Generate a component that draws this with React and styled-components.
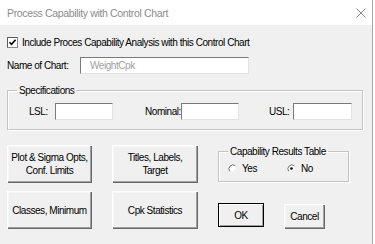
import React, { useState } from "react";
import styled, { createGlobalStyle } from "styled-components";

const uiFont = `"Liberation Sans", Arial, sans-serif`;

const GlobalStyle = createGlobalStyle`
  html, body {
    margin: 0;
    padding: 0;
    background: #ffffff;
  }
  body {
    font-family: ${uiFont};
    font-size: 10px;
    letter-spacing: -0.45px;
    color: #000;
  }
`;

const Window = styled.div`
  width: 372px;
  height: 244px;
  background: #f0f0f0;
  border-right: 1px solid #a8a8a8;
  overflow: hidden;
  display: flex;
  flex-direction: column;
`;

const TitleBar = styled.div`
  height: 25px;
  background: #ffffff;
  display: flex;
  align-items: center;
  justify-content: space-between;
  padding: 0 6px 0 7px;
  flex-shrink: 0;
`;

const Title = styled.div`
  font-size: 10.5px;
  color: #8c8c8c;
  letter-spacing: -0.35px;
`;

const CloseButton = styled.div`
  width: 10px;
  height: 10px;
  display: flex;
`;

const Body = styled.div`
  padding: 0 0 0 7px;
  display: flex;
  flex-direction: column;
`;

const CheckRow = styled.label`
  display: flex;
  align-items: center;
  gap: 4px;
  margin-top: 11px;
  height: 12px;
`;

const Label = styled.span`
  line-height: 13px;
  white-space: nowrap;
`;

const NameRow = styled.div`
  display: flex;
  align-items: center;
  margin-top: 9px;
`;

const NameLabel = styled(Label)`
  width: 73px;
`;

const TextBox = styled.div`
  box-sizing: border-box;
  width: ${(p) => p.$w}px;
  height: 17px;
  background: #ffffff;
  border-top: 1px solid #7a7a7a;
  border-left: 1px solid #7a7a7a;
  border-right: 1px solid #e3e3e3;
  border-bottom: 1px solid #e3e3e3;
  color: #a0a0a0;
  padding-left: 9px;
  line-height: 15px;
`;

const Frame = styled.fieldset`
  margin: 0;
  padding: 0;
  border: 1px solid #c4c4c4;
  box-shadow: inset 1px 1px 0 #ffffff, 1px 1px 0 #ffffff;
  min-width: 0;
`;

const Legend = styled.legend`
  margin-left: 9px;
  padding: 0 2px;
  line-height: 13px;
`;

const SpecFrame = styled(Frame)`
  width: 356px;
  box-sizing: border-box;
  margin-top: 10px;
  height: 46px;
`;

const SpecRow = styled.div`
  display: flex;
  align-items: center;
  margin-top: 6px;
`;

const SpecField = styled.div`
  display: flex;
  align-items: center;
  margin-left: ${(p) => p.$ml}px;
`;

const SpecLabel = styled(Label)`
  width: ${(p) => p.$w}px;
`;

const Lower = styled.div`
  display: grid;
  grid-template-columns: 85px 86px auto;
  grid-template-rows: 38px 38px;
  column-gap: 20px;
  row-gap: 8px;
  margin-top: 15px;
`;

const PushButton = styled.button`
  box-sizing: border-box;
  width: ${(p) => p.$w || "100%"};
  height: ${(p) => p.$h || "100%"};
  margin: 0;
  padding: 0;
  font-family: ${uiFont};
  font-size: 10px;
  letter-spacing: -0.45px;
  line-height: 13px;
  color: #000;
  background: #f0f0f0;
  border: none;
  box-shadow: ${(p) =>
    p.$default
      ? "inset 0 0 0 1px #000, inset 1px 1px 0 1px #ffffff, inset -1px -1px 0 1px #a0a0a0"
      : "inset 1px 1px 0 #ffffff, inset -1px -1px 0 #696969, inset -2px -2px 0 #a0a0a0, inset 2px 2px 0 #f7f7f7"};
  white-space: pre-line;
  text-align: center;
`;

const RightColumn = styled.div`
  grid-row: 1 / span 2;
  grid-column: 3;
  display: flex;
  flex-direction: column;
`;

const ResultsFrame = styled(Frame)`
  width: 131px;
  height: 38px;
  box-sizing: border-box;
`;

const RadioRow = styled.div`
  display: flex;
  align-items: center;
  margin-top: 4px;
  padding-left: 9px;
`;

const RadioOption = styled.label`
  display: flex;
  align-items: center;
  gap: 5px;
  width: ${(p) => p.$w}px;
`;

const ButtonRow = styled.div`
  display: flex;
  align-items: flex-start;
  gap: 20px;
  margin-top: 21px;
`;

const CancelWrap = styled.div`
  margin-top: 1px;
`;

const CheckBox = ({ checked }) => (
  <svg width="11" height="11" viewBox="0 0 11 11">
    <rect x="0.5" y="0.5" width="10" height="10" fill="#fff" stroke="#8a8a8a" />
    <path d="M0.5 10.5 V0.5 H10.5" fill="none" stroke="#5a5a5a" />
    {checked && (
      <path d="M2.5 5.2 L4.5 7.4 L8.6 2.8" fill="none" stroke="#000" strokeWidth="1.6" />
    )}
  </svg>
);

const Radio = ({ checked }) => (
  <svg width="9" height="9" viewBox="0 0 9 9">
    <circle cx="4.5" cy="4.5" r="4" fill="#fff" />
    <path d="M7.3 1.7 A4 4 0 0 0 1.7 7.3" fill="none" stroke="#6a6a6a" strokeWidth="1" />
    <path d="M1.7 7.3 A4 4 0 0 0 7.3 1.7" fill="none" stroke="#e8e8e8" strokeWidth="1" />
    {checked && <circle cx="4.5" cy="4.5" r="1.3" fill="#000" />}
  </svg>
);

export default function App() {
  const [include, setInclude] = useState(true);
  const [results, setResults] = useState("no");

  return (
    <>
      <GlobalStyle />
      <Window>
        <TitleBar>
          <Title>Process Capability with Control Chart</Title>
          <CloseButton>
            <svg width="10" height="10" viewBox="0 0 10 10">
              <path d="M0.5 0.5 L9.5 9.5 M9.5 0.5 L0.5 9.5" stroke="#8a8a8a" strokeWidth="1" />
            </svg>
          </CloseButton>
        </TitleBar>
        <Body>
          <CheckRow onClick={() => setInclude(!include)}>
            <CheckBox checked={include} />
            <Label>Include Proces Capability Analysis with this Control Chart</Label>
          </CheckRow>

          <NameRow>
            <NameLabel>Name of Chart:</NameLabel>
            <TextBox $w={169}>WeightCpk</TextBox>
          </NameRow>

          <SpecFrame>
            <Legend>Specifications</Legend>
            <SpecRow>
              <SpecField $ml={21}>
                <SpecLabel $w={26}>LSL:</SpecLabel>
                <TextBox $w={58} />
              </SpecField>
              <SpecField $ml={32}>
                <SpecLabel $w={36}>Nominal:</SpecLabel>
                <TextBox $w={58} />
              </SpecField>
              <SpecField $ml={30}>
                <SpecLabel $w={24}>USL:</SpecLabel>
                <TextBox $w={59} />
              </SpecField>
            </SpecRow>
          </SpecFrame>

          <Lower>
            <PushButton>{"Plot & Sigma Opts,\nConf. Limits"}</PushButton>
            <PushButton>{"Titles, Labels,\nTarget"}</PushButton>
            <RightColumn>
              <ResultsFrame>
                <Legend>Capability Results Table</Legend>
                <RadioRow>
                  <RadioOption $w={59} onClick={() => setResults("yes")}>
                    <Radio checked={results === "yes"} />
                    <Label>Yes</Label>
                  </RadioOption>
                  <RadioOption $w={40} onClick={() => setResults("no")}>
                    <Radio checked={results === "no"} />
                    <Label>No</Label>
                  </RadioOption>
                </RadioRow>
              </ResultsFrame>
              <ButtonRow>
                <PushButton $default $w="46px" $h="24px">OK</PushButton>
                <CancelWrap>
                  <PushButton $w="41px" $h="25px">Cancel</PushButton>
                </CancelWrap>
              </ButtonRow>
            </RightColumn>
            <PushButton>Classes, Minimum</PushButton>
            <PushButton>Cpk Statistics</PushButton>
          </Lower>
        </Body>
      </Window>
    </>
  );
}
